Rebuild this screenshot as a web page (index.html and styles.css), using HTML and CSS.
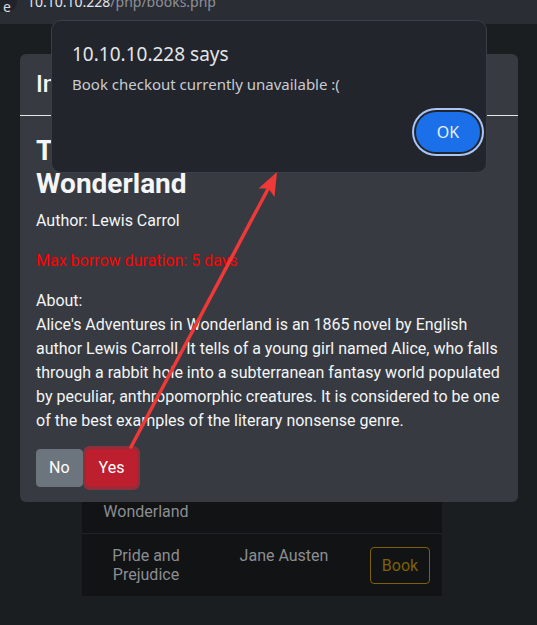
FILE: index.html
```html
<!DOCTYPE html>
<html lang="en">
<head>
<meta charset="utf-8">
<title>Books</title>
<link rel="stylesheet" href="styles.css">
</head>
<body>
<header class="topbar">
  <span class="chip">e</span>
  <span class="url"><span class="host">10.10.10.228</span><span class="path">/php/books.php</span></span>
</header>

<main class="page">
  <table class="books">
    <tr class="head"><th class="c1">Title</th><th class="c2">Author</th><th class="c3"></th></tr>
    <tr><td class="c1">Alice's<br>Adventures in<br>Wonderland</td><td class="c2">Lewis Carrol</td><td class="c3"><span class="btn-book">Book</span></td></tr>
    <tr><td class="c1">Pride and<br>Prejudice</td><td class="c2">Jane Austen</td><td class="c3"><span class="btn-book">Book</span></td></tr>
  </table>
</main>

<section class="modal">
  <div class="modal-header">Information</div>
  <div class="modal-body">
    <h3 class="book-title">The Adventures of Alice in Wonderland</h3>
    <p class="line">Author: Lewis Carrol</p>
    <p class="line warn">Max borrow duration: 5 days</p>
    <p class="line">About:<br>Alice's Adventures in Wonderland is an 1865 novel by English author Lewis Carroll. It tells of a young girl named Alice, who falls through a rabbit hole into a subterranean fantasy world populated by peculiar, anthropomorphic creatures. It is considered to be one of the best examples of the literary nonsense genre.</p>
    <div class="actions">
      <span class="btn btn-no">No</span>
      <span class="btn btn-yes">Yes</span>
    </div>
  </div>
</section>

<div class="alert">
  <div class="alert-title">10.10.10.228 says</div>
  <div class="alert-msg">Book checkout currently unavailable :(</div>
  <div class="alert-foot"><span class="ok">OK</span></div>
</div>

<svg class="annot" width="537" height="625" viewBox="0 0 537 625">
  <line x1="131" y1="447" x2="268" y2="189" stroke="#ef3838" stroke-width="3.5" stroke-linecap="round"/>
  <polygon points="277,172 274.5,197 268.5,188.5 258.5,188.5" fill="#ef3838"/>
</svg>
</body>
</html>
```

FILE: styles.css
```css
html, body {
  margin: 0;
  padding: 0;
}
body {
  background: #1b1e21;
  font-family: Roboto, "Liberation Sans", sans-serif;
  width: 537px;
  height: 625px;
  overflow: hidden;
  position: relative;
}

.topbar {
  height: 24px;
  background: #2b2d35;
  display: flex;
  align-items: flex-start;
  font-family: "Noto Sans", sans-serif;
  font-size: 14px;
  overflow: hidden;
}
.chip {
  width: 14px;
  height: 12px;
  background: #212329;
  border-bottom-right-radius: 10px;
  color: #d8dadf;
  line-height: 14px;
  margin-top: -5px;
  padding-top: 5px;
  padding-left: 3px;
  box-sizing: content-box;
}
.url {
  margin-left: 10px;
  margin-top: -5px;
  line-height: 14px;
}
.host { color: #e4e5e9; }
.path { color: #8d9097; }

.page {
  padding-left: 82px;
  padding-top: 384px;
}
.books {
  border-collapse: collapse;
  background: #111315;
  color: #8c8e91;
  font-size: 16px;
  line-height: 19px;
}
.books th, .books td {
  padding: 12px 0;
  text-align: center;
  vertical-align: top;
  font-weight: 400;
  border-top: 1px solid #1f2225;
}
.books .head th { border-top: none; }
.c1 { width: 128px; }
.c2 { width: 148px; }
.c3 { width: 84px; }
.btn-book {
  display: inline-block;
  width: 58px;
  height: 35px;
  line-height: 35px;
  margin-top: 1px;
  border: 1px solid #7e6108;
  border-radius: 4px;
  color: #7e6108;
}

.modal {
  position: absolute;
  left: 20px;
  top: 54px;
  width: 498px;
  background: #373b41;
  border-radius: 6px;
  color: #f4f5f7;
  z-index: 2;
}
.modal-header {
  padding: 16px;
  font-size: 24px;
  line-height: 28.8px;
  font-weight: 500;
  border-bottom: 1px solid #e4e6e9;
  white-space: nowrap;
  overflow: hidden;
}
.modal-body {
  padding: 18px 16px 15px;
}
.book-title {
  margin: 0 0 8px;
  font-size: 28px;
  line-height: 33.6px;
  font-weight: 700;
}
.line {
  margin: 0 0 16px;
  font-size: 16px;
  line-height: 24px;
}
.warn { color: #ff0000; }
.actions {
  display: flex;
  gap: 3px;
}
.btn {
  display: inline-block;
  padding: 6px 12px;
  font-size: 16px;
  line-height: 24px;
  border: 1px solid transparent;
  border-radius: 4px;
  color: #fff;
}
.btn-no { background: #6c757d; border-color: #6c757d; }
.btn-yes {
  background: #bd1f2f;
  border-color: #bd1f2f;
  box-shadow: 0 0 0 3px #8e303c;
}

.alert {
  position: absolute;
  left: 51px;
  top: 20px;
  width: 436px;
  box-sizing: border-box;
  background: #22252c;
  border: 1px solid #3b3e46;
  border-radius: 10px;
  padding: 20px 6px 20px 20px;
  font-family: "Noto Sans", sans-serif;
  z-index: 3;
}
.alert-title {
  font-size: 19px;
  line-height: 26px;
  color: #e3e4e8;
}
.alert-msg {
  margin-top: 7px;
  font-size: 15px;
  line-height: 20px;
  color: #c9ccd2;
}
.alert-foot {
  margin-top: 18px;
  display: flex;
  justify-content: flex-end;
}
.ok {
  display: inline-block;
  width: 64px;
  height: 40px;
  line-height: 40px;
  text-align: center;
  border-radius: 20px;
  background: #1b6fe8;
  color: #e8f0fe;
  font-size: 16px;
  box-shadow: 0 0 0 2px #22252c, 0 0 0 4px #a9c6f7;
}

.annot {
  position: absolute;
  left: 0;
  top: 0;
  z-index: 4;
  pointer-events: none;
}
```
